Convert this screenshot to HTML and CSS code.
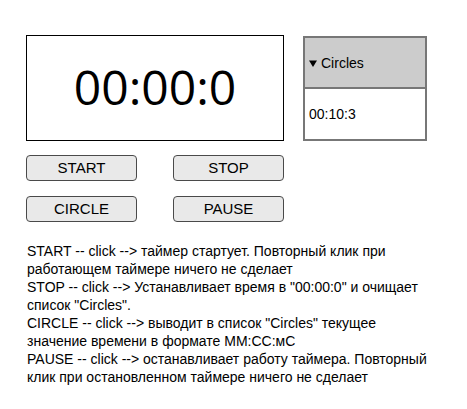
FILE: index.html
```html
<!DOCTYPE html>
<html lang="ru">
<head>
<meta charset="utf-8">
<title>Timer</title>
<link rel="stylesheet" href="styles.css">
</head>
<body>
<div class="app">
  <div class="left">
    <div class="timer">00:00:0</div>
    <div class="buttons">
      <button class="btn">START</button>
      <button class="btn">STOP</button>
      <button class="btn">CIRCLE</button>
      <button class="btn">PAUSE</button>
    </div>
  </div>
  <div class="circles">
    <div class="circles-head"><svg class="marker" width="8" height="7" viewBox="0 0 8 7"><path d="M0 0.5 H8 L4 7 Z" fill="#000"/></svg>Circles</div>
    <div class="circles-item">00:10:3</div>
  </div>
</div>
<div class="desc">
  START -- click --&gt; таймер стартует. Повторный клик при работающем таймере ничего не сделает<br>
  STOP -- click --&gt; Устанавливает время в "00:00:0" и очищает список "Circles".<br>
  CIRCLE -- click --&gt; выводит в список "Circles" текущее значение времени в формате MM:CC:мС<br>
  PAUSE -- click --&gt; останавливает работу таймера. Повторный клик при остановленном таймере ничего не сделает
</div>
</body>
</html>
```
FILE: styles.css
```css
html, body {
  margin: 0;
  padding: 0;
  background: #fff;
}
body {
  font-family: "Liberation Sans", Arial, sans-serif;
  color: #000;
}
.app {
  display: flex;
  align-items: flex-start;
  gap: 19px;
  padding: 35px 0 0 26px;
}
.left {
  width: 258px;
  display: flex;
  flex-direction: column;
  gap: 14px;
}
.timer {
  box-sizing: border-box;
  height: 106px;
  border: 1px solid #000;
  display: flex;
  align-items: center;
  justify-content: center;
  font-family: "Open Sans", "Noto Sans", sans-serif;
  font-size: 48px;
  padding-bottom: 4px;
}
.buttons {
  display: grid;
  grid-template-columns: 111px 111px;
  justify-content: space-between;
  row-gap: 15px;
}
.btn {
  box-sizing: border-box;
  height: 26px;
  margin: 0;
  padding: 0 0 2px;
  border: 1px solid #4a4a4a;
  border-radius: 4px;
  background: #e9e9e9;
  font-family: "Liberation Sans", Arial, sans-serif;
  font-size: 15px;
  color: #000;
}
.circles {
  box-sizing: border-box;
  width: 124px;
  height: 105px;
  margin-top: 1px;
  border: 2px solid #777;
  display: flex;
  flex-direction: column;
  font-size: 14px;
}
.circles-head {
  box-sizing: border-box;
  height: 51px;
  background: #cccccc;
  border-bottom: 2px solid #777;
  display: flex;
  align-items: center;
  padding-left: 4px;
}
.marker {
  margin-right: 4px;
  margin-top: 1px;
}
.circles-item {
  flex: 1;
  display: flex;
  align-items: center;
  padding-left: 4px;
}
.desc {
  margin: 20px 0 0 27px;
  width: 410px;
  font-size: 14px;
  line-height: 18px;
}
```
